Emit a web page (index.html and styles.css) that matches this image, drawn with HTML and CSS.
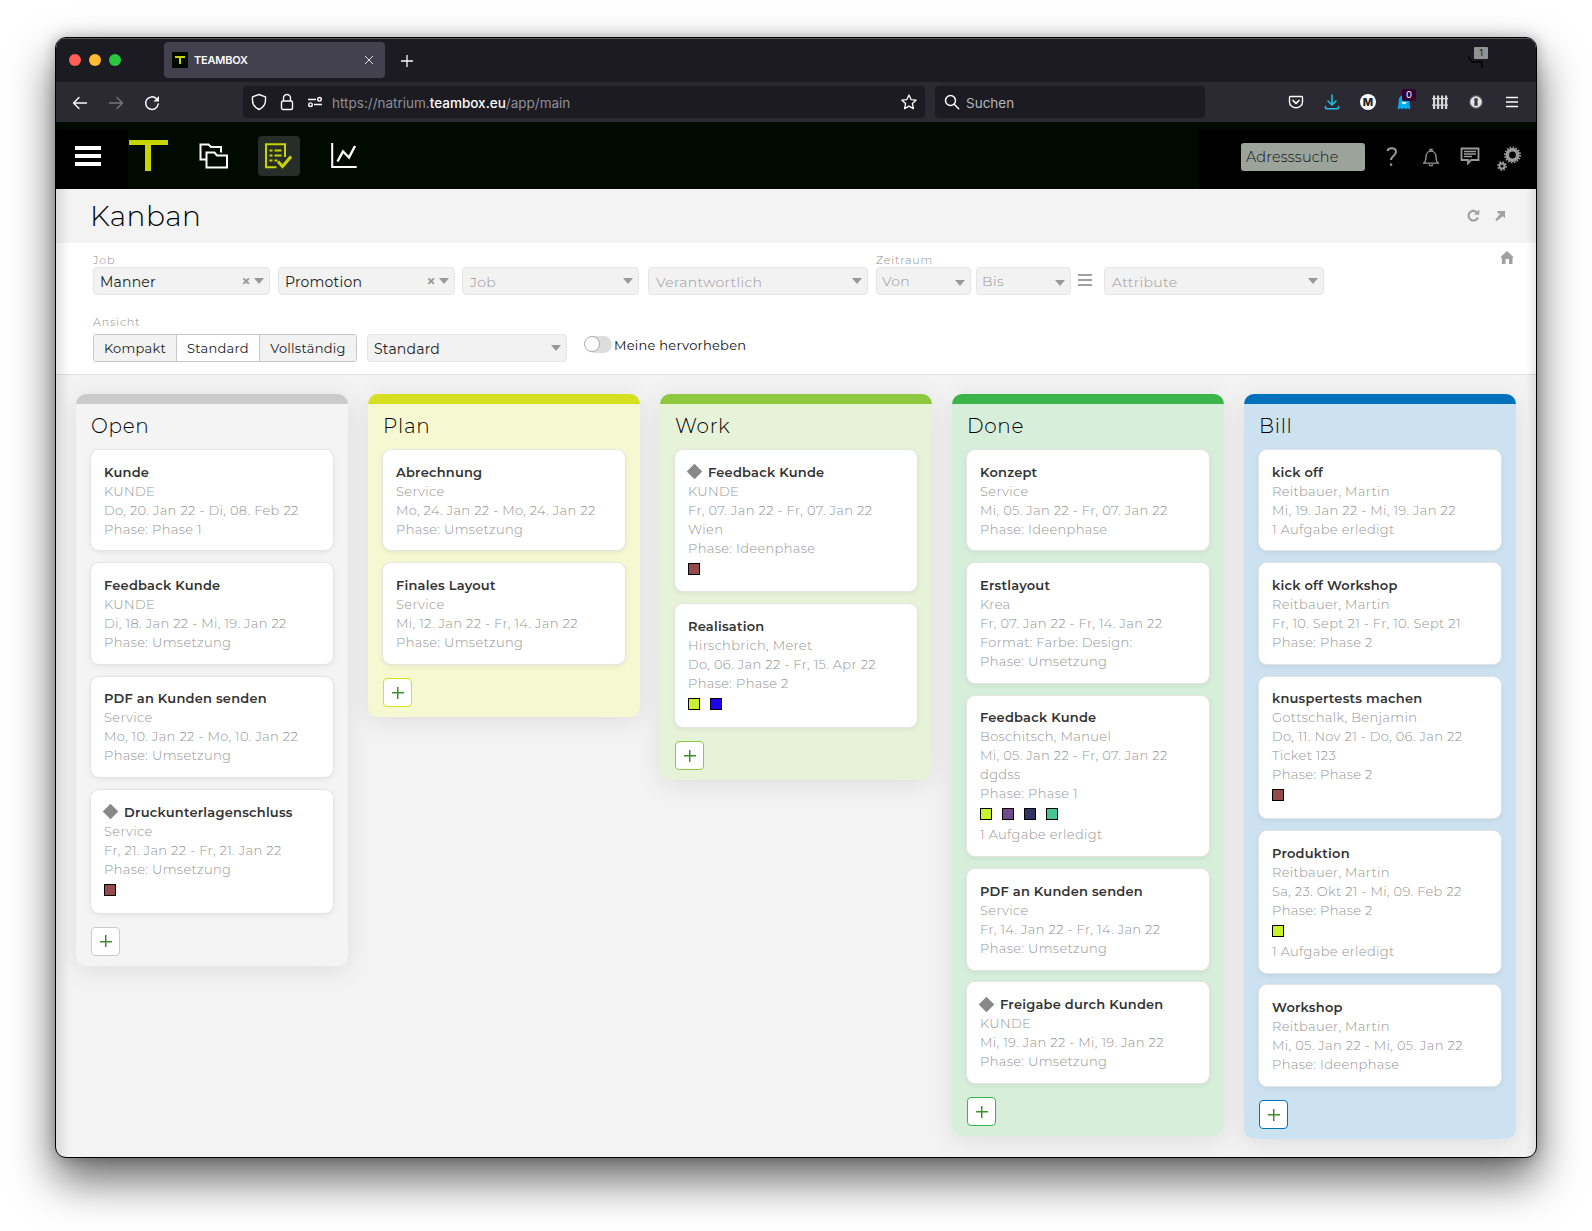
FILE: index.html
```html
<!DOCTYPE html>
<html lang="de">
<head>
  <meta charset="utf-8">
  <title>TEAMBOX</title>
  <link rel="stylesheet" href="styles.css">
</head>
<body>
  <div class="window">

    <!-- Browser: Tabs -->
    <div class="tabbar">
      <div class="lights">
        <span class="light red"></span>
        <span class="light yellow"></span>
        <span class="light green"></span>
      </div>
      <div class="tab">
        <svg class="favicon" width="16" height="16" viewBox="0 0 16 16"><rect width="16" height="16" fill="#000a00"/><path d="M3 4h10v2H9v6H7V6H3z" fill="#c8d400"/></svg>
        <span class="tab-title">TEAMBOX</span>
        <svg width="10" height="10" viewBox="0 0 10 10" fill="none" stroke="#dedee2" stroke-width="1"><path d="M1 1l8 8M9 1l-8 8"/></svg>
      </div>
      <svg class="tab-new" width="14" height="14" viewBox="0 0 14 14" fill="none" stroke="#fbfbfe" stroke-width="1.3"><path d="M7 1v12M1 7h12"/></svg>
      <div class="tab-count">
        <svg width="16" height="14" viewBox="0 0 16 14" fill="none" stroke="#000" stroke-width="1.3"><path d="M0 1l4 6h10v6"/></svg>
        <span>1</span>
      </div>
    </div>

    <!-- Browser: Adressleiste -->
    <div class="navbar">
      <div class="nav-buttons">
        <svg width="16" height="16" viewBox="0 0 16 16" fill="none" stroke="#fbfbfe" stroke-width="1.4" stroke-linecap="round" stroke-linejoin="round"><path d="M14.5 8h-13M7 2.5L1.5 8 7 13.5"/></svg>
        <svg width="16" height="16" viewBox="0 0 16 16" fill="none" stroke="#77767e" stroke-width="1.4" stroke-linecap="round" stroke-linejoin="round"><path d="M1.5 8h13M9 2.5L14.5 8 9 13.5"/></svg>
        <svg width="16" height="16" viewBox="0 0 16 16" fill="none" stroke="#fbfbfe" stroke-width="1.5" stroke-linecap="round"><path d="M14.2 9A6.3 6.3 0 1 1 12.5 3.8"/><path d="M15 1v5.500H9.500z" fill="#fbfbfe" stroke="none"/></svg>
      </div>
      <div class="urlbar">
        <svg width="16" height="18" viewBox="0 0 16 18" fill="none" stroke="#fbfbfe" stroke-width="1.4" stroke-linejoin="round"><path d="M8 1.5l6.5 2.3v3.7c0 4-3 7.300-6.500 9-3.500-1.700-6.500-5-6.500-9V3.800z"/></svg>
        <svg width="14" height="18" viewBox="0 0 14 18" fill="none" stroke="#fbfbfe" stroke-width="1.4"><rect x="1.5" y="8" width="11" height="8.5" rx="1.5"/><path d="M3.500 8V5a3.500 3.500 0 0 1 7 0v3"/></svg>
        <svg width="16" height="12" viewBox="0 0 16 12" fill="none" stroke="#fbfbfe" stroke-width="1.4"><path d="M1 3.500h8M7 8.500h8"/><circle cx="12.5" cy="3.3" r="1.8"/><circle cx="3.5" cy="8.7" r="1.8"/></svg>
        <span class="url">https://natrium.<b>teambox.eu</b>/app/main</span>
        <svg class="star" width="16" height="16" viewBox="0 0 16 16" fill="none" stroke="#fbfbfe" stroke-width="1.3" stroke-linejoin="round"><path d="M8 1l2.100 4.600 5 .6-3.700 3.400 1 5L8 12.100 3.600 14.600l1-5L.9 6.200l5-.6z"/></svg>
      </div>
      <div class="searchbar">
        <svg width="16" height="16" viewBox="0 0 16 16" fill="none" stroke="#fbfbfe" stroke-width="1.5" stroke-linecap="round"><circle cx="6.5" cy="6.5" r="5"/><path d="M10.200 10.200l4.500 4.500"/></svg>
        <span class="search-text">Suchen</span>
      </div>
      <div class="extensions">
        <svg width="16" height="16" viewBox="0 0 16 16" fill="none" stroke="#fbfbfe" stroke-width="1.4" stroke-linecap="round" stroke-linejoin="round"><path d="M2.500 2.500h11c.6 0 1 .4 1 1V8a6.500 5.800 0 0 1-13 0V3.500c0-.6.400-1 1-1z"/><path d="M5 6.500l3 2.800 3-2.800" stroke-width="1.7"/></svg>
        <svg width="16" height="16" viewBox="0 0 16 16" fill="none" stroke="#1fc4e8" stroke-width="1.5" stroke-linecap="round" stroke-linejoin="round"><path d="M8 1v9.500M4 7l4 4 4-4M1.500 12.500v1c0 .8.500 1.300 1.300 1.300h10.400c.8 0 1.300-.5 1.300-1.300v-1"/></svg>
        <span class="ext-m">M</span>
        <span class="ext-ghost">
          <svg width="14" height="16" viewBox="0 0 14 16"><path d="M2 15c-1 .5-1.500 0-1.200-1C1.500 12 1.500 9 1.800 6.500a5.200 5.500 0 0 1 10.400 0c.3 2.500.3 5.500 1 7.500.3 1-.2 1.500-1.200 1l-1.200-1-1.800 1.300L7 14l-2 1.300L3.200 14z" fill="#00aef0"/><path d="M4.500 8a2.500 2 0 0 0 5 0" fill="#fff"/></svg>
          <span class="ext-badge">0</span>
        </span>
        <svg width="16" height="14" viewBox="0 0 16 14" fill="#d7d7da"><path d="M1 1l1-1 1.200 1v13H1zM5 1l1-1 1.200 1v13H5zM9 1l1-1 1.200 1v13H9zM13 1l1-1 1.200 1v13H13zM0 3h16v1.300H0zM0 9.500h16v1.300H0z"/></svg>
        <svg width="16" height="16" viewBox="0 0 16 16"><circle cx="8" cy="8" r="7.200" fill="#4a494f"/><circle cx="8" cy="8" r="5.800" fill="#e3e3e3"/><path d="M6.300 4.300h3.400v3l-.7.700.7.600v3.100H6.300v-3l.7-.7-.7-.6z" fill="#3a393f"/></svg>
        <svg width="14" height="12" viewBox="0 0 14 12" stroke="#fbfbfe" stroke-width="1.4"><path d="M1 1.500h12M1 6h12M1 10.500h12"/></svg>
      </div>
    </div>

    <!-- App-Kopf -->
    <div class="header">
      <div class="header-menu">
        <svg width="26" height="20" viewBox="0 0 26 20" fill="#fff"><path d="M0 0h26v4H0zM0 8h26v4H0zM0 16h26v4H0z"/></svg>
      </div>
      <svg class="logo" width="39" height="31" viewBox="0 0 39 31"><path d="M0 0h39v5H22v26h-6V5H0z" fill="#c8d400"/></svg>
      <svg class="ic-folders" width="30" height="26" viewBox="0 0 30 26" fill="none" stroke="#fff" stroke-width="2"><path d="M7 16.500H1.500V1.500h8l2.500 2.500h10v5.500"/><path d="M7.500 9.500h8l2.500 3h10v12H7.500z"/></svg>
      <div class="nav-active">
        <svg width="28" height="26" viewBox="0 0 28 26" fill="none" stroke="#c8d400" stroke-width="2"><path d="M21 14V1.200H2V24.200h10.500"/><path d="M5.500 7.500h3M10.500 7.500h7M5.500 12.500h3M10.500 12.500h7M5.500 17.500h3M10.500 17.500h3"/><path d="M14 18.500l4.500 5L27 13.500" stroke-width="3"/></svg>
      </div>
      <svg class="ic-chart" width="26" height="26" viewBox="0 0 26 26" fill="none" stroke="#fff" stroke-width="2"><path d="M1.200 0v24h24.500"/><path d="M6.500 18.500l5.500-10 6 6L24 3" stroke-width="2.4"/></svg>
      <div class="header-right">
        <div class="address">Adresssuche</div>
        <svg class="ic-help" width="12" height="20" viewBox="0 0 12 20" fill="none" stroke="#9a9a9a" stroke-width="2"><path d="M1.500 4C2 .5 10 0 10 5c0 3.500-5 4-5 8"/><path d="M4 16.500h2.200v2.200H4z" fill="#9a9a9a" stroke="none"/></svg>
        <svg class="ic-bell" width="18" height="19" viewBox="0 0 18 19" fill="none" stroke="#9a9a9a" stroke-width="1.3"><path d="M1.500 15.200c2-1.500 2.500-3 2.500-6 0-3.500 2-6 5-6s5 2.500 5 6c0 3 .5 4.500 2.500 6z" stroke-linejoin="round"/><path d="M8 3V1.500h2V3M7 16.500c.5 1.500 3.500 1.500 4 0"/></svg>
        <svg class="ic-chat" width="20" height="18" viewBox="0 0 20 18" fill="none" stroke="#9a9a9a" stroke-width="1.8"><path d="M1.500 1.500h17v11.500h-7.500L8 16.500V13H1.500z"/><path d="M4 4.500h12M4 7h12M4 9.500h8" stroke-width="1.4"/></svg>
        <svg class="ic-gears" width="26" height="26" viewBox="0 0 26 26" fill="none" stroke="#9a9a9a"><circle cx="16.5" cy="9" r="5.200" stroke-width="3.600"/><circle cx="16.5" cy="9" r="7.600" stroke-width="1.800" stroke-dasharray="1.500 1.480"/><circle cx="6" cy="20" r="2.500" stroke-width="1.800"/><circle cx="6" cy="20" r="4" stroke-width="1.800" stroke-dasharray="1.600 1.540"/></svg>
      </div>
    </div>

    <div class="page">
      <div class="titlebar">
        <h1>Kanban</h1>
        <svg class="ic-refresh" width="13" height="13" viewBox="0 0 13 13" fill="none" stroke="#a0a0a0" stroke-width="2.200"><path d="M10.900 8.500A4.800 4.800 0 1 1 9.700 3.200"/><path d="M12.300.5v5.300H7z" fill="#a0a0a0" stroke="none"/></svg>
        <svg width="10" height="10" viewBox="0 0 10 10" fill="#a0a0a0"><path d="M2.500 0H10v7.500L7.800 5.300 1.800 10 .3 8.500 5.500 2.400H2.500z"/></svg>
      </div>

      <!-- Filter -->
      <div class="filters">
        <div class="filter-row">
          <div class="field w177"><label>Job</label><div class="select filled">Manner<i class="clear">×</i><i class="arrow"></i></div></div>
          <div class="field w177 ml8"><label></label><div class="select filled">Promotion<i class="clear">×</i><i class="arrow"></i></div></div>
          <div class="field w177 ml7"><label></label><div class="select">Job<i class="arrow"></i></div></div>
          <div class="field w220 ml9"><label></label><div class="select">Verantwortlich<i class="arrow"></i></div></div>
          <div class="field w95 ml8"><label>Zeitraum</label><div class="select date">Von<i class="arrow low"></i></div></div>
          <div class="field w95 ml5"><label></label><div class="select date">Bis<i class="arrow low"></i></div></div>
          <svg class="ic-lines" width="14" height="12" viewBox="0 0 14 12" fill="#a0a0a0"><path d="M0 0h14v2H0zM0 5h14v2H0zM0 10h14v2H0z"/></svg>
          <div class="field w220"><label></label><div class="select">Attribute<i class="arrow"></i></div></div>
          <svg class="ic-home" width="14" height="13" viewBox="0 0 14 13" fill="#a0a0a0"><path d="M7 0l7 6.500h-1.500V13H9V8H5.500v5H1.800V6.500H0z"/></svg>
        </div>
        <div class="filter-row second">
          <div class="field"><label>Ansicht</label>
            <div class="segments">
              <span class="seg s1">Kompakt</span><span class="seg s2 on">Standard</span><span class="seg s3">Vollständig</span>
            </div>
          </div>
          <div class="field w200 ml10"><label></label><div class="select filled">Standard<i class="arrow"></i></div></div>
          <div class="toggle"><span class="knob"></span></div>
          <span class="toggle-label">Meine hervorheben</span>
        </div>
      </div>

      <!-- Board -->
      <div class="board">
        <div class="column open">
          <h2>Open</h2>
          <div class="card"><h3>Kunde</h3><p>KUNDE</p><p>Do, 20. Jan 22 - Di, 08. Feb 22</p><p>Phase: Phase 1</p></div>
          <div class="card"><h3>Feedback Kunde</h3><p>KUNDE</p><p>Di, 18. Jan 22 - Mi, 19. Jan 22</p><p>Phase: Umsetzung</p></div>
          <div class="card"><h3>PDF an Kunden senden</h3><p>Service</p><p>Mo, 10. Jan 22 - Mo, 10. Jan 22</p><p>Phase: Umsetzung</p></div>
          <div class="card"><h3><i class="milestone"></i>Druckunterlagenschluss</h3><p>Service</p><p>Fr, 21. Jan 22 - Fr, 21. Jan 22</p><p>Phase: Umsetzung</p>
            <div class="tags"><i class="tag brown"></i></div></div>
          <div class="add"></div>
        </div>

        <div class="column plan">
          <h2>Plan</h2>
          <div class="card"><h3>Abrechnung</h3><p>Service</p><p>Mo, 24. Jan 22 - Mo, 24. Jan 22</p><p>Phase: Umsetzung</p></div>
          <div class="card"><h3>Finales Layout</h3><p>Service</p><p>Mi, 12. Jan 22 - Fr, 14. Jan 22</p><p>Phase: Umsetzung</p></div>
          <div class="add"></div>
        </div>

        <div class="column work">
          <h2>Work</h2>
          <div class="card"><h3><i class="milestone"></i>Feedback Kunde</h3><p>KUNDE</p><p>Fr, 07. Jan 22 - Fr, 07. Jan 22</p><p>Wien</p><p>Phase: Ideenphase</p>
            <div class="tags"><i class="tag brown"></i></div></div>
          <div class="card"><h3>Realisation</h3><p>Hirschbrich, Meret</p><p>Do, 06. Jan 22 - Fr, 15. Apr 22</p><p>Phase: Phase 2</p>
            <div class="tags"><i class="tag lime"></i><i class="tag blue"></i></div></div>
          <div class="add"></div>
        </div>

        <div class="column done">
          <h2>Done</h2>
          <div class="card"><h3>Konzept</h3><p>Service</p><p>Mi, 05. Jan 22 - Fr, 07. Jan 22</p><p>Phase: Ideenphase</p></div>
          <div class="card"><h3>Erstlayout</h3><p>Krea</p><p>Fr, 07. Jan 22 - Fr, 14. Jan 22</p><p>Format: Farbe: Design:</p><p>Phase: Umsetzung</p></div>
          <div class="card"><h3>Feedback Kunde</h3><p>Boschitsch, Manuel</p><p>Mi, 05. Jan 22 - Fr, 07. Jan 22</p><p>dgdss</p><p>Phase: Phase 1</p>
            <div class="tags"><i class="tag lime"></i><i class="tag purple"></i><i class="tag navy"></i><i class="tag teal"></i></div>
            <p>1 Aufgabe erledigt</p></div>
          <div class="card"><h3>PDF an Kunden senden</h3><p>Service</p><p>Fr, 14. Jan 22 - Fr, 14. Jan 22</p><p>Phase: Umsetzung</p></div>
          <div class="card"><h3><i class="milestone"></i>Freigabe durch Kunden</h3><p>KUNDE</p><p>Mi, 19. Jan 22 - Mi, 19. Jan 22</p><p>Phase: Umsetzung</p></div>
          <div class="add"></div>
        </div>

        <div class="column bill">
          <h2>Bill</h2>
          <div class="card"><h3>kick off</h3><p>Reitbauer, Martin</p><p>Mi, 19. Jan 22 - Mi, 19. Jan 22</p><p>1 Aufgabe erledigt</p></div>
          <div class="card"><h3>kick off Workshop</h3><p>Reitbauer, Martin</p><p>Fr, 10. Sept 21 - Fr, 10. Sept 21</p><p>Phase: Phase 2</p></div>
          <div class="card"><h3>knuspertests machen</h3><p>Gottschalk, Benjamin</p><p>Do, 11. Nov 21 - Do, 06. Jan 22</p><p>Ticket 123</p><p>Phase: Phase 2</p>
            <div class="tags"><i class="tag brown"></i></div></div>
          <div class="card"><h3>Produktion</h3><p>Reitbauer, Martin</p><p>Sa, 23. Okt 21 - Mi, 09. Feb 22</p><p>Phase: Phase 2</p>
            <div class="tags"><i class="tag lime"></i></div>
            <p>1 Aufgabe erledigt</p></div>
          <div class="card"><h3>Workshop</h3><p>Reitbauer, Martin</p><p>Mi, 05. Jan 22 - Mi, 05. Jan 22</p><p>Phase: Ideenphase</p></div>
          <div class="add"></div>
        </div>
      </div>
    </div>
  </div>
</body>
</html>
```

FILE: styles.css
```css
* {
  box-sizing: border-box;
}

body {
  margin: 0;
  height: 1231px;
  padding: 37px 55px 0;
  background: #fff;
  font-family: Montserrat, Inter, sans-serif;
  overflow: hidden;
}

h1, h2, h3, p {
  margin: 0;
  font-weight: 300;
}

i {
  font-style: normal;
}

svg {
  display: block;
  flex: none;
}

.window {
  width: 1482px;
  height: 1121px;
  border: 1px solid #000;
  border-radius: 11px;
  overflow: hidden;
  display: flex;
  flex-direction: column;
  background: #f3f3f3;
  box-shadow: 0 22px 45px rgba(0, 0, 0, .6), 0 0 14px rgba(0, 0, 0, .25);
}

/* Browser */
.tabbar {
  height: 44px;
  flex: none;
  display: flex;
  align-items: center;
  background: #1c1b22;
  border-top: 1px solid #55555a;
  font-family: Inter, sans-serif;
}

.lights {
  display: flex;
  gap: 8px;
  margin: -2px 0 0 13px;
}

.light {
  width: 12px;
  height: 12px;
  border-radius: 50%;
}

.red { background: #ff5f57; }
.yellow { background: #febc2e; }
.green { background: #28c840; }

.tab {
  width: 221px;
  height: 36px;
  margin: -1px 0 0 43px;
  padding: 0 11px 0 8px;
  display: flex;
  align-items: center;
  background: #42414d;
  border-radius: 4px;
}

.tab-title {
  flex: 1;
  margin-left: 6px;
  font-size: 11px;
  font-weight: 600;
  letter-spacing: -.2px;
  color: #fbfbfe;
}

.tab-new {
  margin-left: 14.5px;
}

.tab-count {
  position: relative;
  margin-top: 2px;
  margin-left: auto;
  margin-right: 52px;
}

.tab-count span {
  position: absolute;
  left: 6px;
  top: -8px;
  width: 14px;
  height: 12px;
  border-radius: 1px;
  background: #929292;
  color: #111;
  font-size: 9px;
  line-height: 12px;
  text-align: center;
}

.navbar {
  height: 40px;
  flex: none;
  display: flex;
  align-items: center;
  background: #2b2a33;
  font-family: Inter, sans-serif;
  font-size: 13.5px;
}

.nav-buttons {
  display: flex;
  gap: 20px;
  margin: 1px 0 0 16px;
}

.urlbar,
.searchbar {
  height: 32px;
  display: flex;
  align-items: center;
  background: #1c1b22;
  border-radius: 4px;
}

.urlbar {
  width: 682px;
  margin-left: 83px;
  padding: 0 8px;
  gap: 13px;
}

.url {
  margin: 2px 0 0 -4px;
  color: #8f8f97;
}

.url b {
  font-weight: 500;
  color: #fbfbfe;
}

.star {
  margin-left: auto;
}

.searchbar {
  width: 270px;
  margin-left: 10px;
  padding-left: 9px;
  gap: 6px;
  color: #b5b5bb;
}

.search-text {
  margin-top: 2px;
}

.extensions {
  display: flex;
  align-items: center;
  gap: 20px;
  margin-left: 83px;
}

.ext-m {
  width: 16px;
  height: 16px;
  border-radius: 50%;
  background: #fff;
  color: #222;
  font-size: 11px;
  font-weight: 800;
  line-height: 16px;
  text-align: center;
}

.ext-ghost {
  position: relative;
  width: 16px;
  padding-left: 1px;
}

.ext-badge {
  position: absolute;
  left: 6px;
  top: -5px;
  width: 14px;
  height: 12px;
  border-radius: 2px;
  background: #330033;
  color: #fff;
  font-size: 9.5px;
  line-height: 12px;
  text-align: center;
}

.extensions svg:last-child {
  margin-left: 1px;
}

.ext-ghost svg:last-child {
  margin-left: 0;
}

/* App */
.header {
  height: 67px;
  flex: none;
  display: flex;
  background: #000a00;
}

.header-menu {
  width: 72px;
  margin-top: 7px;
  padding: 17px 0 0 19px;
  background: #000;
}

.logo {
  margin: 18px 0 0 .5px;
}

.ic-folders {
  margin: 21px 0 0 31.5px;
}

.nav-active {
  width: 42px;
  height: 40px;
  margin: 14px 0 0 29px;
  padding: 7px 0 0 6px;
  border-radius: 4px;
  background: #272e2a;
}

.ic-chart {
  margin: 21px 0 0 30.5px;
}

.header-right {
  width: 337px;
  margin: 7px 0 0 auto;
  display: flex;
  background: #000;
}

.address {
  width: 124px;
  height: 28px;
  margin: 14px 0 0 42px;
  padding-left: 5px;
  border-radius: 3px;
  background: #9ba39a;
  color: #111;
  font-size: 14.5px;
  font-weight: 300;
  line-height: 28px;
  letter-spacing: .15px;
}

.ic-help { margin: 18px 0 0 21px; }
.ic-bell { margin: 19px 0 0 24px; }
.ic-chat { margin: 18px 0 0 20px; }
.ic-gears { margin: 17px 0 0 15.5px; }

.page {
  position: relative;
  flex: 1;
  display: flex;
  flex-direction: column;
}

.page::after {
  content: "";
  position: absolute;
  inset: 0;
  background:
    linear-gradient(to right, rgba(0, 0, 0, .1), transparent 14px),
    linear-gradient(to left, rgba(0, 0, 0, .08), transparent 10px);
}

.titlebar {
  height: 54px;
  display: flex;
  align-items: center;
  padding: 0 31px 0 34px;
}

h1 {
  flex: 1;
  font-size: 28px;
  line-height: 54px;
  letter-spacing: .5px;
}

.ic-refresh {
  margin: -1px 15px 0 0;
}

.filters {
  height: 132px;
  background: #fff;
  border-bottom: 1px solid #e0e0e0;
  padding: 10px 0 0 37px;
}

.filter-row {
  display: flex;
}

.second {
  margin-top: 20px;
}

.field label {
  display: block;
  height: 14px;
  font-size: 11px;
  font-weight: 300;
  line-height: 14px;
  letter-spacing: .9px;
  color: #8c8c8c;
}

.second .field label {
  margin-bottom: 5px;
}

.w95 { width: 95px; }
.w177 { width: 177px; }
.w200 { width: 200px; }
.w220 { width: 220px; }
.ml5 { margin-left: 5px; }
.ml7 { margin-left: 7px; }
.ml8 { margin-left: 8px; }
.ml9 { margin-left: 9px; }
.ml10 { margin-left: 10px; }

.select {
  height: 28px;
  display: flex;
  align-items: center;
  padding: 1px 5px 0 7px;
  border: 1px solid #e5e5e5;
  border-radius: 4px;
  background: #f2f2f2;
  color: #999;
  font-size: 14px;
  font-weight: 300;
  letter-spacing: .35px;
}

.filled {
  padding-left: 6px;
  color: #222;
  font-weight: 400;
  letter-spacing: .2px;
}

.date {
  padding: 0 5px 1px;
}

.arrow {
  margin: -2px 0 0 auto;
  border: 5px solid transparent;
  border-top: 6px solid #999;
  border-bottom: 0;
}

.low {
  margin-top: 4px;
}

.clear {
  margin: -1px 3px 0 auto;
  font-size: 17px;
  font-weight: 600;
  line-height: 17px;
  letter-spacing: 0;
  color: #999;
}

.clear + .arrow {
  margin-left: 0;
}

.ic-lines {
  margin: 21px 12px 0 7px;
}

.ic-home {
  margin: -2px 22px 0 auto;
}

.segments {
  display: flex;
  width: 264px;
  height: 28px;
  border: 1px solid #c6c6c6;
  border-radius: 3px;
  overflow: hidden;
}

.seg {
  border-left: 1px solid #c6c6c6;
  background: #f2f2f2;
  color: #222;
  font-size: 13px;
  line-height: 27px;
  letter-spacing: .25px;
  text-align: center;
}

.s1 { width: 82px; border-left: 0; }
.s2 { width: 83px; }
.s3 { flex: 1; }

.on {
  background: #fff;
}

.toggle {
  width: 26px;
  height: 17px;
  margin: 21px 0 0 19px;
  border-radius: 9px;
  background: #ddd;
}

.knob {
  display: block;
  width: 16px;
  height: 16px;
  border: 1px solid #aaa;
  border-radius: 50%;
  background: #fff;
  margin-left: -2px;
}

.toggle-label {
  margin: 21px 0 0 2px;
  font-size: 13px;
  line-height: 19px;
  letter-spacing: .25px;
  color: #111;
}

/* Kanban */
.board {
  display: flex;
  align-items: flex-start;
  gap: 20px;
  padding: 19px 20px 0;
}

.column {
  width: 272px;
  padding: 0 14px 10px;
  border-top: 10px solid;
  border-radius: 10px;
  box-shadow: 0 4px 26px rgba(0, 0, 0, .09);
}

.open { background: #f4f4f4; border-color: #cbcbcb; }
.plan { background: #f6f8d2; border-color: #d6df20; }
.work { background: #e7f3d9; border-color: #8dc83f; }
.done { background: #d7efda; border-color: #3bb54a; }
.bill { background: #cce2f0; border-color: #0072bc; }

h2 {
  height: 44.8px;
  padding-left: 1px;
  font-size: 20px;
  line-height: 44px;
  letter-spacing: .7px;
  color: #000;
}

.card {
  margin-bottom: 10.8px;
  padding: 12.8px 13px 11.8px;
  border: 1px solid #e4e4e4;
  border-radius: 9px;
  background: #fff;
  box-shadow: 0 2px 5px rgba(0, 0, 0, .06);
}

.card h3 {
  display: flex;
  align-items: center;
  font-size: 13px;
  font-weight: 600;
  line-height: 19px;
  letter-spacing: .22px;
  color: #333;
}

.card p {
  font-size: 13px;
  line-height: 19px;
  letter-spacing: .35px;
  color: #949494;
  white-space: nowrap;
}

.milestone {
  width: 11px;
  height: 11px;
  margin: -1px 8px 0 1px;
  background: #888;
  transform: rotate(45deg);
}

.tags {
  display: flex;
  gap: 10px;
  height: 22px;
  padding-top: 5px;
}

.tag {
  width: 12px;
  height: 12px;
  border: 1px solid #000;
}

.brown { background: #934b4b; }
.lime { background: #c8f22d; }
.blue { background: #1e00ff; }
.purple { background: #6f4a8c; }
.navy { background: #2e3362; }
.teal { background: #48c494; }

.add {
  width: 29px;
  height: 29px;
  margin: 13.4px 0 0 1px;
  border: 1px solid;
  border-color: inherit;
  border-radius: 4px;
  background:
    linear-gradient(#3d8f2b, #3d8f2b) center / 12px 1.5px no-repeat,
    linear-gradient(#3d8f2b, #3d8f2b) center / 1.5px 12px no-repeat,
    #fff;
}
```
